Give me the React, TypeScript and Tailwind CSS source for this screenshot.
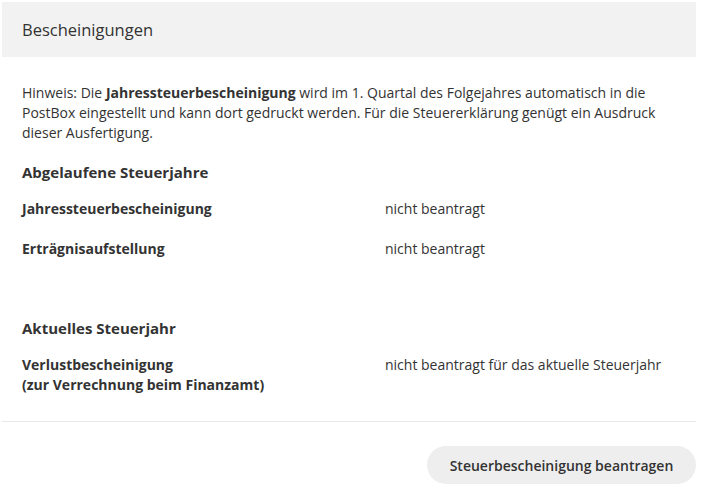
import React from 'react';

const body = "font-['Open_Sans',sans-serif]";

interface RowProps {
  label: React.ReactNode;
  value: string;
}

const Row: React.FC<RowProps> = ({ label, value }) => (
  <div className="flex text-[14px] leading-[20px] text-[#333]">
    <div className="w-[363px] font-bold">{label}</div>
    <div>{value}</div>
  </div>
);

const App: React.FC = () => {
  return (
    <div className={`w-[708px] h-[496px] bg-white pl-[2px] pt-[2px] ${body}`}>
      <div className="w-[694px]">
        <div className="h-[55px] bg-[#f2f2f2] flex items-center px-5">
          <h2 className="text-[16.5px] text-[#333] pt-[2px]">Bescheinigungen</h2>
        </div>

        <div className="px-5 pt-[26px] pb-[26px] border-b border-[#e8e8e8]">
          <p className="text-[14px] leading-[20px] text-[#333]">
            Hinweis: Die <b className="font-bold">Jahressteuerbescheinigung</b> wird im 1. Quartal des Folgejahres automatisch in die PostBox eingestellt und kann dort gedruckt werden. Für die Steuererklärung genügt ein Ausdruck dieser Ausfertigung.
          </p>

          <h3 className="mt-[18px] text-[15px] leading-[22px] font-bold text-[#333]">Abgelaufene Steuerjahre</h3>
          <div className="mt-[16px] flex flex-col gap-[20px]">
            <Row label="Jahressteuerbescheinigung" value="nicht beantragt" />
            <Row label="Erträgnisaufstellung" value="nicht beantragt" />
          </div>

          <h3 className="mt-[58px] text-[15px] leading-[22px] font-bold text-[#333]">Aktuelles Steuerjahr</h3>
          <div className="mt-[16px]">
            <Row
              label={<>Verlustbescheinigung<br />(zur Verrechnung beim Finanzamt)</>}
              value="nicht beantragt für das aktuelle Steuerjahr"
            />
          </div>
        </div>

        <div className="flex justify-end pt-[24px]">
          <button className="h-[38px] w-[269px] rounded-full bg-[#eeeeee] text-[14px] font-semibold text-[#333]">
            Steuerbescheinigung beantragen
          </button>
        </div>
      </div>
    </div>
  );
};

export default App;
